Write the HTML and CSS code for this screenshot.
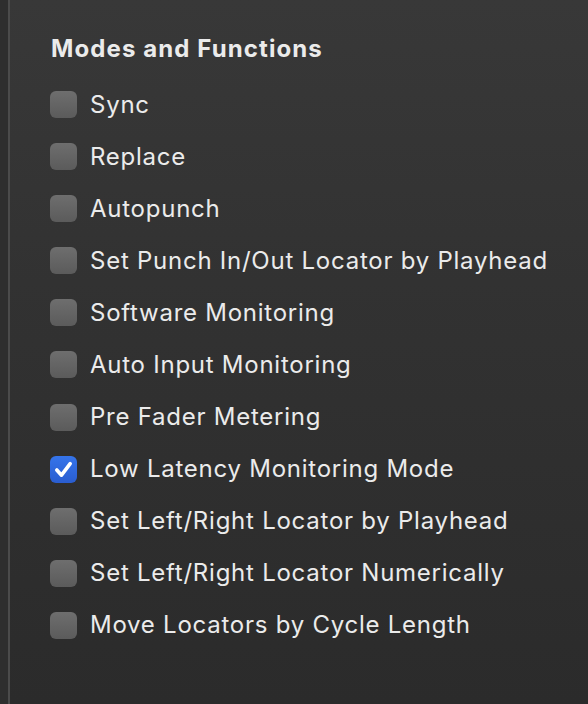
FILE: index.html
```html
<!DOCTYPE html>
<html>
<head>
<meta charset="utf-8">
<link rel="stylesheet" href="styles.css">
</head>
<body>
<div class="gutter"></div>
<div class="panel">
  <h1 class="title">Modes and Functions</h1>
  <ul class="options">
    <li class="option"><span class="box"></span><span class="label">Sync</span></li>
    <li class="option"><span class="box"></span><span class="label">Replace</span></li>
    <li class="option"><span class="box"></span><span class="label">Autopunch</span></li>
    <li class="option"><span class="box"></span><span class="label">Set Punch In/Out Locator by Playhead</span></li>
    <li class="option"><span class="box"></span><span class="label">Software Monitoring</span></li>
    <li class="option"><span class="box"></span><span class="label">Auto Input Monitoring</span></li>
    <li class="option"><span class="box"></span><span class="label">Pre Fader Metering</span></li>
    <li class="option"><span class="box checked"><svg viewBox="0 0 27 27" width="27" height="27"><path d="M6.8 14 L11.5 19.2 L20.2 7.6" fill="none" stroke="#fff" stroke-width="3.6" stroke-linecap="round" stroke-linejoin="round"/></svg></span><span class="label">Low Latency Monitoring Mode</span></li>
    <li class="option"><span class="box"></span><span class="label">Set Left/Right Locator by Playhead</span></li>
    <li class="option"><span class="box"></span><span class="label">Set Left/Right Locator Numerically</span></li>
    <li class="option"><span class="box"></span><span class="label">Move Locators by Cycle Length</span></li>
  </ul>
</div>
</body>
</html>
```

FILE: styles.css
```css
html, body {
  margin: 0;
  padding: 0;
  height: 100%;
}
body {
  display: flex;
  background: #2d2d2d;
  font-family: Inter, "Liberation Sans", sans-serif;
  color: #e9e9e9;
  overflow: hidden;
}
.gutter {
  width: 8px;
  flex: none;
  background: #2e2e2e;
}
.panel {
  flex: 1;
  border-left: 2px solid #4b4b4b;
  background: linear-gradient(to bottom, #383838 0%, #323232 40%, #2b2b2b 100%);
  padding: 35px 0 0 40px;
}
.title {
  margin: 0 0 28px 1px;
  font-size: 24px;
  font-weight: 700;
  line-height: 28px;
  color: #ebebeb;
  letter-spacing: 1.1px;
}
.options {
  list-style: none;
  margin: 0;
  padding: 0;
  display: flex;
  flex-direction: column;
  gap: 25.1px;
}
.option {
  display: flex;
  align-items: center;
  gap: 13px;
  height: 27px;
}
.box {
  width: 27px;
  height: 27px;
  box-sizing: border-box;
  border-radius: 6px;
  background: linear-gradient(to bottom, #6e6e6e, #5b5b5b);
  flex: none;
  display: flex;
}
.box.checked {
  background: linear-gradient(to bottom, #3574ea, #2a5dd0);
}
.label {
  font-size: 24px;
  line-height: 28px;
  color: #ebebeb;
  letter-spacing: 0.75px;
}
```
